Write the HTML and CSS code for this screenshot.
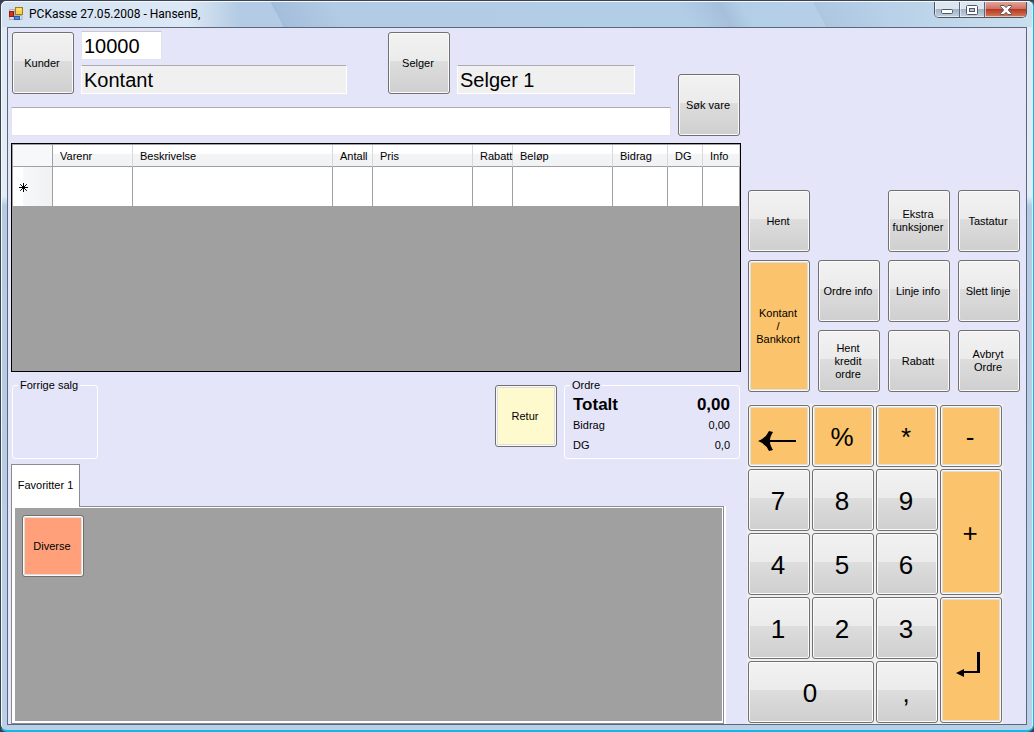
FILE: index.html
```html
<!DOCTYPE html>
<html lang="no">
<head>
<meta charset="utf-8">
<title>PCKasse</title>
<link rel="stylesheet" href="styles.css">
</head>
<body>
<div class="window">
  <header class="titlebar">
    <svg class="app-icon" width="14" height="14" viewBox="0 0 14 14" aria-hidden="true">
      <path d="M.5 2.500h5v10h-5zM5 8.500h8v4H5z" fill="#d9e1ea" stroke="#a9b2bd"/>
      <rect x=".5" y="4.500" width="4" height="5" fill="#d9301f" stroke="#8e1c12"/>
      <rect x="6.500" y=".5" width="7" height="7" fill="#fbcf3e" stroke="#a57b16"/>
      <rect x="7.500" y="1.500" width="5" height="2" fill="#fde68d"/>
      <rect x="5.500" y="9.500" width="5" height="3" fill="#4f8be8" stroke="#2c5cb0"/>
    </svg>
    <h1 class="title">PCKasse 27.05.2008 - HansenB,</h1>
    <div class="window-controls">
      <button class="control" type="button" aria-label="Minimer"><svg class="minimize-icon" width="13" height="5" viewBox="0 0 13 5"><rect x=".5" y=".5" width="11" height="4" rx="1" fill="#fff" stroke="#535666"/></svg></button>
      <button class="control" type="button" aria-label="Maksimer"><svg width="12" height="10" viewBox="0 0 12 10"><rect x=".5" y=".5" width="11" height="9" rx="1" fill="#fff" stroke="#535666"/><rect x="3.500" y="3.500" width="5" height="3" fill="#b4c6da" stroke="#535666"/></svg></button>
      <button class="control control-close" type="button" aria-label="Lukk"><svg width="12" height="10" viewBox="0 0 12 10"><path d="M.5.5h3.500L6 2.600 8 .5h3.500v1L8.300 5l3.200 3.500v1H8L6 7.400 4 9.500H.5v-1L3.700 5 .5 1.500z" fill="#fff" stroke="#535666"/></svg></button>
    </div>
  </header>
  <main class="client">
    <section class="sale">
      <div class="entry">
        <div class="entry-fields">
          <div class="parties">
            <button class="btn" type="button">Kunder</button>
            <div class="customer">
              <input class="field field-number" value="10000" aria-label="Kundenr">
              <input class="field field-readonly" value="Kontant" aria-label="Kunde" readonly>
            </div>
            <button class="btn" type="button">Selger</button>
            <input class="field field-readonly field-seller" value="Selger 1" aria-label="Selger" readonly>
          </div>
          <input class="field field-search" aria-label="Vare">
        </div>
        <button class="btn" type="button">Søk vare</button>
      </div>

      <div class="lines">
        <table class="lines-table">
          <colgroup><col class="c-mark"><col class="c-number"><col class="c-text"><col class="c-small"><col class="c-price"><col class="c-small"><col class="c-price"><col class="c-share"><col class="c-dg"><col></colgroup>
          <thead><tr><th></th><th>Varenr</th><th>Beskrivelse</th><th>Antall</th><th>Pris</th><th>Rabatt</th><th>Beløp</th><th>Bidrag</th><th>DG</th><th>Info</th></tr></thead>
          <tbody><tr><td class="mark"><svg width="9" height="9" viewBox="0 0 9 9" aria-label="Ny linje"><path d="M4.500 0v9M0 4.500h9M1.200 1.200l6.600 6.600M7.800 1.200l-6.600 6.600" stroke="#000"/></svg></td><td></td><td></td><td></td><td></td><td></td><td></td><td></td><td></td><td></td></tr></tbody>
        </table>
      </div>

      <div class="summary">
        <fieldset class="group group-previous"><legend>Forrige salg</legend></fieldset>
        <button class="btn btn-yellow" type="button">Retur</button>
        <fieldset class="group group-order">
          <legend>Ordre</legend>
          <dl class="totals">
            <div class="total total-main"><dt>Totalt</dt><dd>0,00</dd></div>
            <div class="total"><dt>Bidrag</dt><dd>0,00</dd></div>
            <div class="total"><dt>DG</dt><dd>0,0</dd></div>
          </dl>
        </fieldset>
      </div>

      <div class="favourites">
        <button class="tab" type="button">Favoritter 1</button>
        <div class="tab-panel">
          <div class="tab-body"><button class="btn btn-salmon" type="button">Diverse</button></div>
        </div>
      </div>
    </section>

    <aside class="actions">
      <div class="commands">
        <button class="btn" type="button">Hent</button>
        <button class="btn third" type="button">Ekstra<br>funksjoner</button>
        <button class="btn" type="button">Tastatur</button>
        <button class="btn btn-orange tall" type="button">Kontant<br>/<br>Bankkort</button>
        <button class="btn" type="button">Ordre info</button>
        <button class="btn" type="button">Linje info</button>
        <button class="btn" type="button">Slett linje</button>
        <button class="btn" type="button">Hent<br>kredit<br>ordre</button>
        <button class="btn" type="button">Rabatt</button>
        <button class="btn" type="button">Avbryt<br>Ordre</button>
      </div>
      <div class="keypad">
        <button class="btn key btn-orange" type="button" aria-label="Slett tegn"><svg class="back-icon" width="38" height="28" viewBox="0 0 38 28"><path d="M0 18Q8 15 11 8L15 9Q12 14 12 17H38V19H12Q12 22 15 27L11 28Q8 21 0 18z"/></svg></button>
        <button class="btn key btn-orange" type="button">%</button>
        <button class="btn key btn-orange" type="button">*</button>
        <button class="btn key btn-orange" type="button">-</button>
        <button class="btn key" type="button">7</button>
        <button class="btn key" type="button">8</button>
        <button class="btn key" type="button">9</button>
        <button class="btn key btn-orange tall" type="button">+</button>
        <button class="btn key" type="button">4</button>
        <button class="btn key" type="button">5</button>
        <button class="btn key" type="button">6</button>
        <button class="btn key" type="button">1</button>
        <button class="btn key" type="button">2</button>
        <button class="btn key" type="button">3</button>
        <button class="btn key btn-orange tall" type="button" aria-label="Enter"><svg width="28" height="32" viewBox="0 0 28 32"><path d="M21 7h3v21H8v4L0 28l8-4v2h13z"/></svg></button>
        <button class="btn key wide" type="button">0</button>
        <button class="btn key" type="button">,</button>
      </div>
    </aside>
  </main>
</div>
</body>
</html>
```
FILE: styles.css
```css
* { box-sizing: border-box; }

body {
  margin: 0;
  background: #3a3f49;
  font-family: "Liberation Sans", Arial, sans-serif;
  font-size: 11px;
  line-height: 13px;
  color: #000;
}

button, input { font: inherit; color: inherit; }

.window {
  display: flex;
  flex-direction: column;
  min-height: 100vh;
  padding: 0 5px 5px;
  border: 1px solid #3b4250;
  border-right-color: #12b9e6;
  border-bottom: 2px solid #12b9e6;
  border-radius: 6px 6px 7px 7px;
  background: linear-gradient(#dfeaf6 0, #e2edf8 195px, #b4cae3 205px, #b9d0e8 100%);
  box-shadow: inset 1px 1px #f4f9fe, inset -1px 0 #d8ecfa;
}

.titlebar {
  display: flex;
  align-items: flex-start;
  height: 26px;
  margin: 0 -4px;
  padding: 0 5px 0 7px;
  border-top: 1px solid #f4f9fe;
  border-radius: 5px 5px 0 0;
  background:
    linear-gradient(62deg, transparent 27%, #a3bedb 27%, #a9c4e000 33%),
    linear-gradient(62deg, transparent 66%, #a6c0dc 70%, #b4cde500 72%),
    linear-gradient(62deg, transparent 79%, #adc7e1 79%, #c1d6ea00 85%),
    linear-gradient(90deg, #d3e1f1 0, #dce8f5 18%, #b3cbe4 23%, #b2cee7 70%, #b7d0e8 85%, #cadeee 100%);
}

.app-icon { margin: 5px 6px 0 0; }

.title {
  flex: 1;
  margin: 5px 0 0;
  font: 12px/15px Roboto, "Noto Sans", sans-serif;
}

.window-controls {
  display: flex;
  border: 1px solid #4c5564;
  border-top: 0;
  border-radius: 0 0 5px 5px;
  overflow: hidden;
}

.control {
  display: flex;
  align-items: center;
  justify-content: center;
  width: 25px;
  height: 15px;
  padding: 0;
  border: 0;
  border-right: 1px solid #59667a;
  background: linear-gradient(#dce6f0 50%, #a3b3c8 50%, #c2d1e0);
  box-shadow: inset 1px 0 #ffffff88, inset 0 -1px #ffffff88;
}

.control-close {
  width: 41px;
  border-right: 0;
  background: linear-gradient(#e3a497 0, #cd6f60 48%, #b53a26 50%, #d77a58);
}

.minimize-icon { margin-top: 4px; }

.client {
  display: flex;
  flex: 1;
  gap: 7px;
  margin: 0 1px;
  padding: 0 6px 0 3px;
  border: 1px solid #5b6878;
  background: #e5e5f9;
}

.sale { display: flex; flex: 1; flex-direction: column; min-width: 0; }

.btn {
  width: 62px;
  height: 62px;
  padding: 0 4px 0 2px;
  border: 1px solid #707070;
  border-radius: 3px;
  background: linear-gradient(#f2f2f2, #ebebeb 47%, #dddddd 47%, #cfcfcf);
  box-shadow: inset 0 0 0 1px #fafafa;
  white-space: nowrap;
}

.btn-orange { background: #fbc36b; }
.btn-yellow { background: #fffacd; }
.btn-salmon { background: #ffa07a; }
.btn-orange, .btn-yellow, .btn-salmon { box-shadow: inset 0 0 0 1px #fafafa, inset 0 0 0 2px #dedede; }

.entry { display: flex; align-items: flex-end; gap: 7px; padding: 3px 1px 7px 0; }
.entry-fields { flex: 1; min-width: 0; }
.parties { display: flex; align-items: flex-end; padding-left: 1px; margin-bottom: 13px; }
.customer { display: flex; flex-direction: column; gap: 5px; width: 266px; margin: 0 41px 0 7px; }

.field {
  height: 29px;
  padding: 1px 2px 0;
  border: 1px solid #e3e3ec;
  border-top-color: #abadb3;
  border-radius: 0;
  background: #fff;
  font-size: 20px;
}
.field-number { width: 81px; border-top-color: #c8c8d2; }
.field-readonly { border-color: #abadb3 #fff #fff; background: #f0f0f0; }
.field-seller { width: 178px; margin-left: 7px; }
.field-search { display: block; width: 100%; }

.lines { height: 229px; border: 1px solid #000; background: #a0a0a0; }
.lines-table { width: 100%; table-layout: fixed; border-collapse: separate; border-spacing: 0; border-top: 1px solid #a0a0a0; border-left: 1px solid #a0a0a0; }
.c-mark { width: 40px; }
.c-number { width: 80px; }
.c-text { width: 200px; }
.c-small { width: 40px; }
.c-price { width: 100px; }
.c-share { width: 55px; }
.c-dg { width: 35px; }
.lines-table th {
  height: 22px;
  padding: 2px 0 0 7px;
  border-right: 1px solid #d9dadc;
  border-bottom: 1px solid #a0a0a0;
  background: linear-gradient(#fff 40%, #f3f4f6 45%, #f1f2f4);
  font-weight: normal;
  text-align: left;
  white-space: nowrap;
}
.lines-table th:first-child { border-right-color: #a0a0a0; background: #f7f8fa; }
.lines-table td { height: 40px; padding: 0; border-right: 1px solid #a0a0a0; border-bottom: 1px solid #a0a0a0; background: #fff; }
.lines-table .mark { padding: 2px 0 0 6px; background: linear-gradient(90deg, #fff 10px, #f7f8fa 10px, #f0f1f3); }
.mark svg { display: block; }

.summary { display: flex; align-items: flex-start; padding: 7px 0 5px 1px; }
.summary .btn { margin: 6px 7px 0 auto; }
.group { height: 80px; margin: 0; padding: 0 9px 0 8px; border: 1px solid #fff; border-radius: 3px; min-width: 0; }
.group legend { margin-left: -3px; padding: 0 2px; }
.group-previous { width: 86px; }
.group-order { width: 176px; }
.summary { padding-right: 1px; }
.totals { margin: 3px 0 0; }
.total { display: flex; justify-content: space-between; line-height: 20px; }
.total dd { margin: 0; }
.total-main { font-size: 17px; font-weight: bold; }

.favourites { display: flex; flex: 1; flex-direction: column; align-items: flex-start; padding-right: 17px; }
.tab {
  z-index: 1;
  width: 69px;
  height: 43px;
  margin-bottom: -1px;
  padding: 0 0 2px;
  border: 1px solid #898c95;
  border-bottom: 0;
  background: #fff;
  white-space: nowrap;
}
.tab-panel { display: flex; flex: 1; width: 100%; padding: 1px 1px 2px 3px; border: 1px solid #898c95; background: #fff; box-shadow: 2px 0 #fff; }
.tab-body { flex: 1; padding: 7px; background: #a0a0a0; }

.actions { width: 272px; padding-top: 162px; }
.commands { display: grid; grid-template-columns: repeat(4, 62px); grid-auto-rows: 62px; gap: 8px; }
.third { grid-column: 3; }
.tall { grid-row: span 2; height: auto; }
.wide { grid-column: span 2; width: auto; }
.keypad {
  display: grid;
  grid-template-columns: repeat(4, 62px);
  grid-auto-rows: 62px;
  gap: 2px;
  width: fit-content;
  margin: 12px 0 0 -1px;
  padding: 1px;
  background: #f0f0f0;
}
.key { padding-top: 1px; font-size: 26px; line-height: 30px; }
.key svg { display: block; margin: 0 auto; }
.key .back-icon { margin-left: 7px; }
```
